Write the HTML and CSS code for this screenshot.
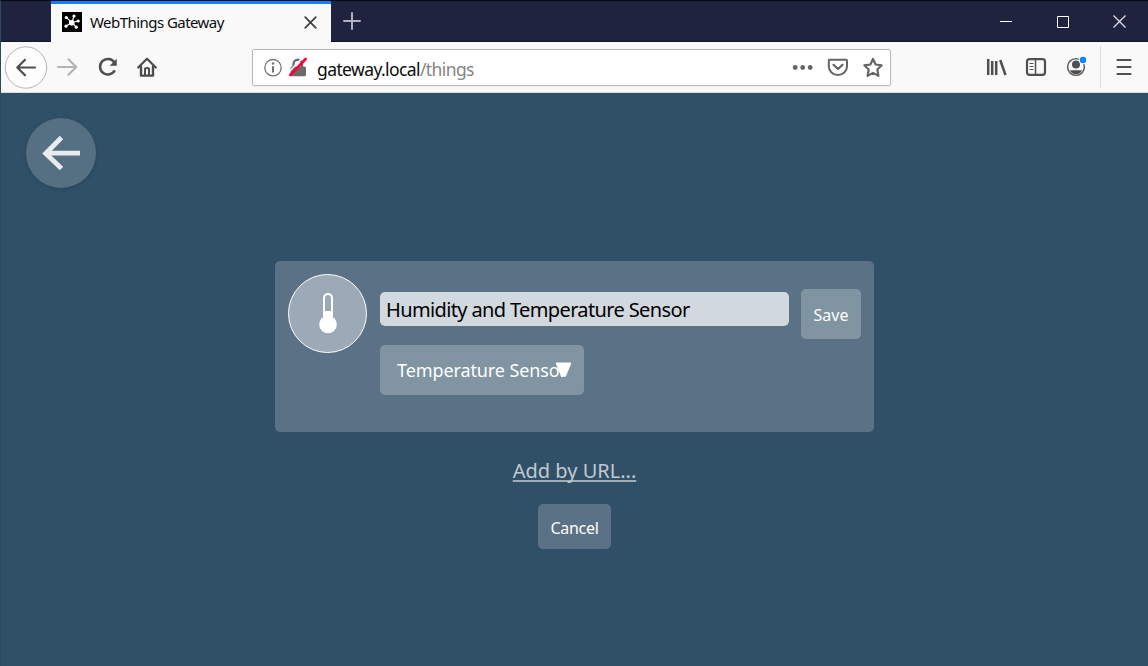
FILE: index.html
```html
<!DOCTYPE html>
<html lang="en">
<head>
<meta charset="utf-8">
<title>WebThings Gateway</title>
<link rel="stylesheet" href="styles.css">
</head>
<body>
<div class="window">
  <header class="tabbar">
    <div class="tab">
      <svg class="favicon" width="20" height="20" viewBox="0 0 20 20"><rect width="20" height="20" fill="#000"/><g stroke="#fff" stroke-width="1.2"><path d="M10 10.5L4.5 5.6M10 10.5L12 4M10 10.5L16 9M10 10.5L14.2 15.2M10 10.5L4.2 14"/></g><g fill="#fff"><circle cx="9.7" cy="10.7" r="2.8"/><circle cx="4.3" cy="5.5" r="1.6"/><circle cx="12" cy="4" r="1.6"/><circle cx="16.2" cy="9" r="1.6"/><circle cx="14.3" cy="15.2" r="1.6"/><circle cx="4" cy="14.2" r="1.6"/></g></svg>
      <span class="tab-title">WebThings Gateway</span>
      <svg class="tab-close" width="13" height="13" viewBox="0 0 13 13"><path d="M1.2 1.2L11.8 11.8M11.8 1.2L1.2 11.8" stroke="#3e3e40" stroke-width="1.7" stroke-linecap="round"/></svg>
    </div>
    <svg class="newtab" width="18" height="18" viewBox="0 0 18 18"><path d="M9 1V17M1 9H17" stroke="#b0b1bc" stroke-width="2" stroke-linecap="round"/></svg>
    <div class="controls">
      <svg width="12" height="13" viewBox="0 0 12 13"><path d="M0 6.5H12" stroke="#fff"/></svg>
      <svg width="12" height="13" viewBox="0 0 12 13"><path d="M.5 1.5H11.5V12.5H.5Z" fill="none" stroke="#fff"/></svg>
      <svg class="win-close" width="13" height="13" viewBox="0 0 13 13"><path d="M.5 .5L12.5 12.5M12.5 .5L.5 12.5" stroke="#e4e4e9" stroke-width="1.2"/></svg>
    </div>
  </header>

  <nav class="toolbar">
    <svg class="nav-icons" width="160" height="50" viewBox="0 0 160 50" fill="none" stroke="#4d4d4e" stroke-width="2.2" stroke-linecap="round" stroke-linejoin="round">
      <circle cx="25" cy="25.5" r="20.7" fill="#fdfdfd" stroke="#b5b5b6" stroke-width="1"/>
      <path d="M34 25.500H16.500M24 17.800L16.300 25.500L24 33.200"/>
      <path d="M57 25H75M67.500 17.300L75.200 25L67.500 32.700" stroke="#b4b4b5"/>
      <path d="M113.200 20.200A7.800 7.800 0 1 0 113.800 28.300" stroke-linecap="butt" stroke-width="2.500"/>
      <path d="M115.700 16.700V23.700H108.700Z" fill="#4d4d4e" stroke="none"/>
      <path d="M137.200 25.500L146 16.700L154.800 25.500"/>
      <path d="M140 24.500V33.600H152V24.500" stroke-width="2.400"/>
      <path d="M144 33V27Q144 26 146 26Q148 26 148 27V33" stroke-width="2"/>
    </svg>
    <div class="urlbar">
      <svg class="url-icons" width="48" height="24" viewBox="0 0 48 24" fill="none">
        <circle cx="10" cy="11.700" r="8.200" stroke="#737373" stroke-width="1.300"/>
        <path d="M10 11V15.700" stroke="#737373" stroke-width="2" stroke-linecap="round"/><circle cx="10" cy="7.600" r="1.250" fill="#737373"/>
        <path d="M30.500 11V8A4.200 4.200 0 0 1 39 8V11" stroke="#6b6b6b" stroke-width="2.300"/>
        <rect x="27.500" y="10.500" width="15.500" height="9.800" rx="1.500" fill="#6b6b6b"/>
        <path d="M25 17L39.500 1.800" stroke="#fff" stroke-width="1.500"/>
        <path d="M27.300 19L42.700 3" stroke="#ff0039" stroke-width="2.600" stroke-linecap="round"/>
      </svg>
      <span class="url"><span class="host">gateway.local</span><span class="path">/things</span></span>
      <svg class="url-actions" width="92" height="24" viewBox="0 0 92 24" fill="none" stroke="#656566" stroke-width="2.200" stroke-linejoin="round" stroke-linecap="round">
        <g fill="#656566" stroke="none"><circle cx="3.200" cy="11.500" r="2.400"/><circle cx="10.700" cy="11.500" r="2.400"/><circle cx="18.200" cy="11.500" r="2.400"/></g>
        <path d="M37 3.800H54Q55 3.800 55 4.800V10.500A8.800 8.300 0 0 1 36.800 10.500V4.800Q36.800 3.800 37 3.800Z" stroke-width="2"/><path d="M41.500 8.800L46 13L50.500 8.800"/>
        <path d="M81 3L83.600 8.500L89.700 9.300L85.300 13.500L86.400 19.900L81 16.900L75.600 19.900L76.700 13.500L72.300 9.300L78.400 8.500Z" stroke-width="2.200"/>
      </svg>
    </div>
    <svg class="tools" width="160" height="50" viewBox="0 0 160 50" fill="none" stroke="#505051" stroke-width="2.200" stroke-linecap="round">
      <path d="M2.200 17V33M6.200 19V33M10.200 19V33M14.200 18L19.500 33" stroke-width="2.500" stroke-linecap="butt"/>
      <rect x="41" y="17.200" width="18" height="15.600" rx="2.500"/><path d="M49.500 17V33" stroke-width="1.500"/><path d="M44 21.500H47M44 24.500H47M44 27.500H47" stroke-width="1.200"/>
      <circle cx="90" cy="25" r="8.400" stroke-width="1.400"/><circle cx="90" cy="22.500" r="4" fill="#505051" stroke="none"/><path d="M84 28.200H96Q94.500 32.300 90 32.300Q85.500 32.300 84 28.200Z" fill="#505051" stroke="none"/>
      <circle cx="97" cy="18" r="4.300" fill="#f9f9fa" stroke="none"/><circle cx="97" cy="18" r="3.200" fill="#0a84ff" stroke="none"/>
      <path d="M114.500 4V46" stroke="#dcdcdd" stroke-width="1" stroke-linecap="butt"/>
      <path d="M131.500 18H144.500M131.500 25H144.500M131.500 32H144.500"/>
    </svg>
  </nav>

  <main class="page">
    <button class="back" aria-label="Back"><svg width="70" height="70" viewBox="0 0 70 70"><path d="M54 35.200H19.500M35.500 19.500L19.700 35.500L35.500 50.500" fill="none" stroke="#e8ecef" stroke-width="4.800" stroke-linejoin="miter"/></svg></button>
    <section class="thing">
      <div class="thing-icon"><svg width="20" height="42" viewBox="0 0 20 42"><rect x="6" y="1" width="8" height="28" rx="4" fill="none" stroke="#fff" stroke-width="2"/><rect x="5.500" y="18" width="9" height="10" fill="#fff"/><circle cx="10" cy="31.500" r="8.800" fill="#fff"/></svg></div>
      <div class="fields">
        <div class="name"><span>Humidity and Temperature Sensor</span></div>
        <div class="type"><span>Temperature Sensor</span><svg class="caret" width="17" height="15" viewBox="0 0 17 15"><path d="M1.500 1.200H15.500L10.300 14H6.700Z" fill="#fff" stroke="#fff" stroke-width="1.500" stroke-linejoin="round"/></svg></div>
      </div>
      <button class="save"><span>Save</span></button>
    </section>
    <a class="add-url"><span>Add by URL...</span></a>
    <button class="cancel"><span>Cancel</span></button>
  </main>
</div>
</body>
</html>
```
FILE: styles.css
```css
* { box-sizing: border-box; }
body { margin: 0; overflow: hidden; font-family: "Noto Sans", sans-serif; }
button { border: 0; padding: 0; color: #fff; font-family: inherit; }
svg { display: block; flex: none; }
span { white-space: nowrap; }

.window { width: 1148px; height: 666px; display: flex; flex-direction: column; border-left: 1px solid #2c4a59; border-top: 1px solid #080a12; background: #305067; }

.tabbar { height: 41px; flex: none; display: flex; background: #202340; box-shadow: inset 0 -1px #15172d; }
.tab { width: 280px; height: 41px; margin-left: 50px; padding: 2px 14px 0 11px; display: flex; align-items: center; background: #f9f9fa; border-top: 3px solid #0a84ff; }
.favicon { margin-top: -4px; }
.tab-title { margin: -4px 0 0 8px; font-size: 15px; line-height: 20px; color: #0c0c0d; letter-spacing: -.55px; }
.tab-close { margin: -3px 0 0 auto; }
.newtab { margin: 11px 0 0 12px; }
.controls { display: flex; gap: 45px; margin: 14px 22px 0 auto; }
.win-close { margin-left: -1px; }
.controls { margin-right: 21px; padding-right: 1px; }

.toolbar { height: 51px; flex: none; display: flex; background: #f9f9fa; border-bottom: 1px solid #dddde1; }
.urlbar { width: 639px; height: 37px; margin: 7px 0 0 91px; display: flex; align-items: center; background: #fff; border: 1px solid #b9b9ba; border-radius: 2px; box-shadow: 0 1px 3px rgba(0, 0, 0, .06); }
.url-icons { margin-left: 10px; }
.url { margin: 2px 0 0 6px; font-size: 17.5px; line-height: 24px; letter-spacing: -.6px; }
.host { color: #0c0c0d; }
.path { color: #858585; }
.url-actions { margin: 0 6px 0 auto; }
.tools { margin-left: 95px; }

.page { flex: 1; display: flex; flex-direction: column; align-items: center; }
.back { align-self: flex-start; width: 70px; height: 70px; margin: 25px 0 0 25px; border-radius: 50%; background: #567083; box-shadow: 0 1px 4px rgba(0, 0, 0, .16); }
.thing { width: 599px; height: 171px; margin-top: 73px; padding: 12px 13px; display: flex; align-items: flex-start; background: #5b7185; border-radius: 5px; }
.thing-icon { width: 79px; height: 79px; margin-top: 1px; display: flex; align-items: center; justify-content: center; border: 1px solid #fff; border-radius: 50%; background: #9ca9b6; }
.fields { margin: 19px 0 0 13px; }
.name { width: 409px; height: 34px; padding: 1px 0 0 6px; border-radius: 5px; background: #d1d8de; color: #000; font-size: 20px; line-height: 34px; letter-spacing: -.63px; }
.type { position: relative; width: 204px; height: 50px; margin-top: 19px; padding-left: 17px; border-radius: 5px; background: #8094a1; color: #fff; font-size: 18px; line-height: 51px; letter-spacing: -.1px; }
.caret { position: absolute; left: 175px; top: 17px; }
.save { width: 60px; height: 50px; margin: 16px 0 0 12px; border-radius: 5px; background: #8094a1; font-size: 16px; line-height: 52px; }
.add-url { margin-top: 24px; height: 28px; font-size: 20px; line-height: 30px; color: #c2cad0; text-decoration: underline; text-decoration-color: #a1adb6; text-decoration-thickness: 2px; text-underline-offset: 2px; text-decoration-skip-ink: none; }
.cancel { width: 73px; height: 45px; margin-top: 20px; border-radius: 5px; background: #5b7185; font-size: 16px; line-height: 48px; letter-spacing: -.3px; }
```
